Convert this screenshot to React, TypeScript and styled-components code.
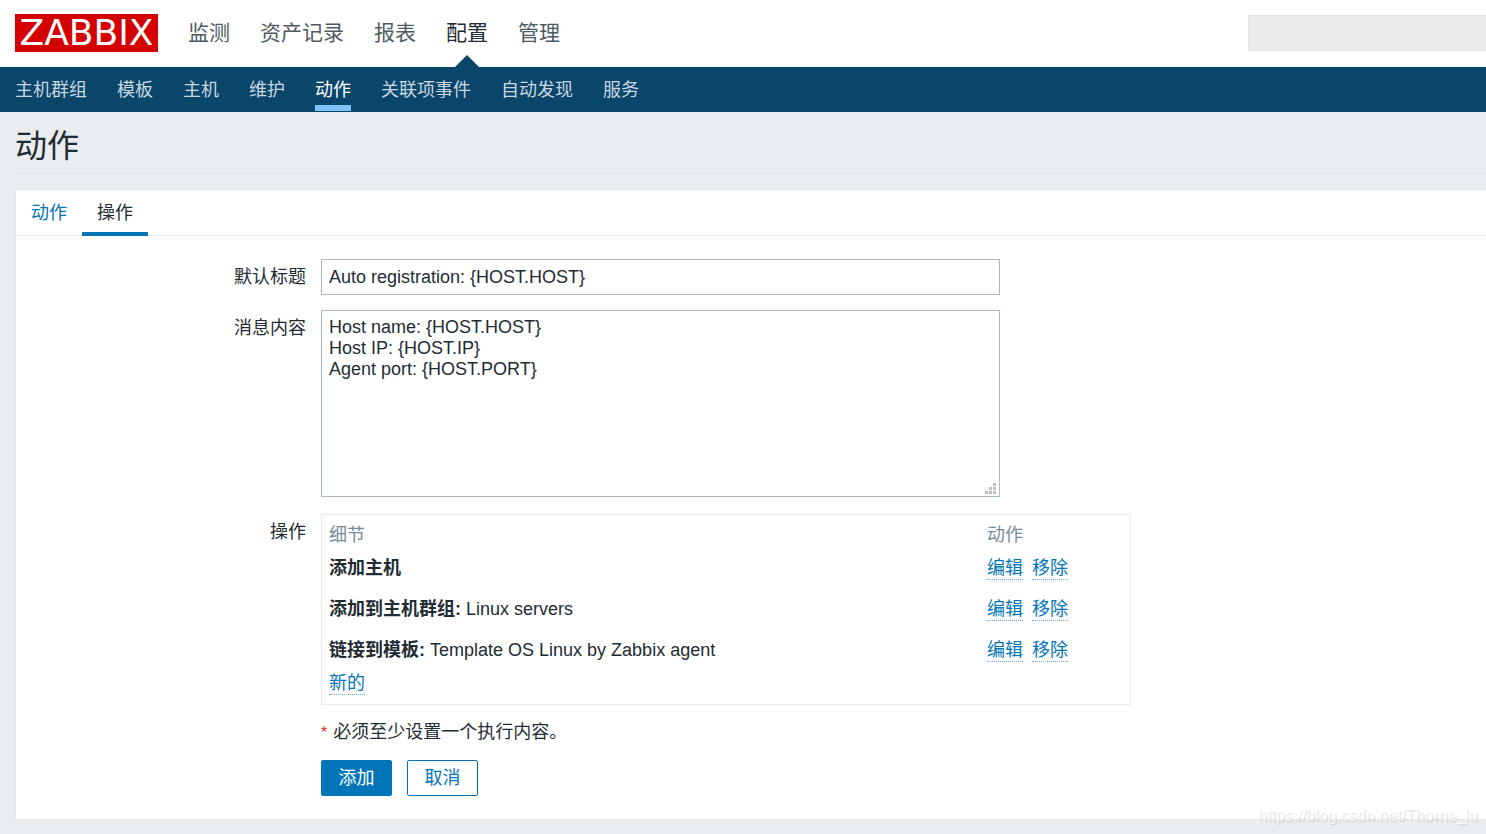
import React from "react";
import styled, { createGlobalStyle } from "styled-components";

const GlobalStyle = createGlobalStyle`
  *, *::before, *::after { box-sizing: border-box; }
  body {
    margin: 0;
    background: #e9edf0;
    color: #1f2c33;
    font-family: "Liberation Sans", "Noto Sans CJK SC", sans-serif;
    font-size: 18px;
    line-height: 21px;
  }
  button, input, textarea { font: inherit; color: inherit; }
  a { text-decoration: none; color: inherit; }
`;

const Page = styled.div`
  position: relative;
  min-height: 100vh;
  display: flex;
  flex-direction: column;
`;

const TopBar = styled.header`
  display: flex;
  align-items: center;
  height: 67px;
  padding: 0 0 2px 15px;
  background: #fff;
`;

const Logo = styled.a`
  width: 143px;
  height: 38px;
  background: #d40000;
  color: #fff;
  font-family: "DejaVu Sans", sans-serif;
  font-size: 36px;
  line-height: 38px;
  text-align: center;
`;

const TopNav = styled.nav`
  display: flex;
  gap: 30px;
  align-self: stretch;
  margin-left: 30px;
`;

const TopLink = styled.a<{ $active?: boolean }>`
  position: relative;
  font-size: 21px;
  line-height: 65px;
  color: ${(p) => (p.$active ? "#1f2c33" : "#4f5b62")};
  &::after {
    content: "";
    display: ${(p) => (p.$active ? "block" : "none")};
    position: absolute;
    bottom: -2px;
    left: 50%;
    margin-left: -12px;
    border: 12px solid transparent;
    border-top-width: 0;
    border-bottom-color: #0a466a;
  }
`;

const Search = styled.input`
  width: 238px;
  height: 36px;
  margin-left: auto;
  padding: 0 7px;
  border: 1px solid #e4e4e4;
  border-right: 0;
  border-radius: 0;
  background: #ebebeb;
  outline: none;
`;

const SubNav = styled.nav`
  display: flex;
  gap: 30px;
  height: 45px;
  padding: 0 15px;
  background: #0a466a;
`;

const SubLink = styled.a<{ $active?: boolean }>`
  height: 44px;
  line-height: 38px;
  padding-top: 4px;
  color: ${(p) => (p.$active ? "#fff" : "#c8d7e0")};
  border-bottom: 6px solid ${(p) => (p.$active ? "#7dc4f5" : "transparent")};
`;

const Content = styled.main`
  padding-left: 15px;
`;

const Title = styled.h1`
  height: 62px;
  margin: 0 0 15px;
  padding-top: 10px;
  border-bottom: 1px solid #dfe4e7;
  font-size: 32px;
  font-weight: 400;
  line-height: 48px;
`;

const Panel = styled.section`
  border: 1px solid #dfe4e7;
  border-right: 0;
  background: #fff;
`;

const Tabs = styled.div`
  display: flex;
  height: 46px;
  border-bottom: 1px solid #ebeef0;
`;

const Tab = styled.button<{ $active?: boolean }>`
  height: 46px;
  padding: 4px 15px 0;
  border: 0;
  border-bottom: 4px solid ${(p) => (p.$active ? "#0275b8" : "transparent")};
  background: none;
  line-height: 38px;
  color: ${(p) => (p.$active ? "#1f2c33" : "#0275b8")};
  cursor: pointer;
`;

const Form = styled.form`
  padding: 23px 0;
`;

const Row = styled.div<{ $gap?: number }>`
  display: grid;
  grid-template-columns: 290px minmax(0, 810px);
  column-gap: 15px;
  margin-bottom: ${(p) => p.$gap ?? 17}px;
  &:last-child { margin-bottom: 0; }
`;

const Label = styled.label`
  text-align: right;
  line-height: 36px;
`;

const Field = styled.div`
  grid-column: 2;
  min-width: 0;
`;

const TextInput = styled.input`
  display: block;
  width: 100%;
  max-width: 679px;
  height: 36px;
  padding: 0 7px;
  border: 1px solid #acbbc2;
  border-radius: 0;
  background: #fff;
  outline: none;
`;

const AreaWrap = styled.div`
  position: relative;
  max-width: 679px;
`;

const TextArea = styled.textarea`
  display: block;
  width: 100%;
  height: 187px;
  padding: 6px 7px;
  border: 1px solid #acbbc2;
  border-radius: 0;
  line-height: 21px;
  resize: none;
  outline: none;
`;

const Grip = styled.svg`
  position: absolute;
  right: 4px;
  bottom: 3px;
  fill: #bdbdbd;
`;

const TableBox = styled.div`
  padding: 8px 7px;
  border: 1px solid #e8ecef;
`;

const Table = styled.table`
  width: 100%;
  border-collapse: collapse;
  table-layout: fixed;
  th, td { padding: 0; text-align: left; vertical-align: middle; }
  th { height: 25px; font-weight: 400; color: #768d99; }
  td { height: 41px; }
  th:last-child { width: 136px; }
  tfoot td { height: 25px; }
`;

const Actions = styled.div`
  display: flex;
  gap: 9px;
`;

const LinkButton = styled.button`
  display: block;
  height: 23px;
  padding: 0;
  border: 0;
  border-bottom: 1px dotted #67acd4;
  background: none;
  line-height: 22px;
  color: #0275b8;
  cursor: pointer;
`;

const Note = styled.p`
  display: flex;
  gap: 6px;
  margin: 0;
`;

const Asterisk = styled.span`
  font-size: 16px;
  color: #e33734;
`;

const Buttons = styled.div`
  display: flex;
  gap: 15px;
`;

const Button = styled.button<{ $primary?: boolean }>`
  width: 71px;
  height: 36px;
  padding: 1px 0 0;
  border: 1px solid #0275b8;
  border-radius: 2px;
  background: ${(p) => (p.$primary ? "#0275b8" : "#fff")};
  color: ${(p) => (p.$primary ? "#fff" : "#0275b8")};
  cursor: pointer;
`;

const Watermark = styled.span`
  position: absolute;
  right: 8px;
  bottom: 8px;
  font-size: 16px;
  color: rgba(255, 255, 255, 0.7);
  text-shadow: 1px 1px 1px rgba(0, 0, 0, 0.14);
`;

const topItems = ["监测", "资产记录", "报表", "配置", "管理"];
const subItems = ["主机群组", "模板", "主机", "维护", "动作", "关联项事件", "自动发现", "服务"];
const operations = [
  { kind: "添加主机", target: "" },
  { kind: "添加到主机群组:", target: "Linux servers" },
  { kind: "链接到模板:", target: "Template OS Linux by Zabbix agent" },
];
const message = "Host name: {HOST.HOST}\nHost IP: {HOST.IP}\nAgent port: {HOST.PORT}";

export default function App() {
  return (
    <Page>
      <GlobalStyle />
      <TopBar>
        <Logo href="#">ZABBIX</Logo>
        <TopNav>
          {topItems.map((item) => (
            <TopLink key={item} href="#" $active={item === "配置"}>{item}</TopLink>
          ))}
        </TopNav>
        <Search type="search" aria-label="搜索" />
      </TopBar>
      <SubNav>
        {subItems.map((item) => (
          <SubLink key={item} href="#" $active={item === "动作"}>{item}</SubLink>
        ))}
      </SubNav>
      <Content>
        <Title>动作</Title>
        <Panel>
          <Tabs role="tablist">
            <Tab type="button" role="tab" aria-selected={false}>动作</Tab>
            <Tab type="button" role="tab" aria-selected $active>操作</Tab>
          </Tabs>
          <Form onSubmit={(e) => e.preventDefault()}>
            <Row $gap={15}>
              <Label htmlFor="subject">默认标题</Label>
              <Field>
                <TextInput id="subject" type="text" defaultValue="Auto registration: {HOST.HOST}" />
              </Field>
            </Row>
            <Row>
              <Label htmlFor="message">消息内容</Label>
              <Field>
                <AreaWrap>
                  <TextArea id="message" defaultValue={message} spellCheck={false} />
                  <Grip width="11" height="11" viewBox="0 0 11 11" aria-hidden="true">
                    <path d="M8 0h3v3h-3zM4 4h3v3h-3zM8 4h3v3h-3zM0 8h3v3h-3zM4 8h3v3h-3zM8 8h3v3h-3z" />
                  </Grip>
                </AreaWrap>
              </Field>
            </Row>
            <Row>
              <Label as="span" id="operations-label">操作</Label>
              <TableBox>
                <Table aria-labelledby="operations-label">
                  <thead>
                    <tr><th>细节</th><th>动作</th></tr>
                  </thead>
                  <tbody>
                    {operations.map((op) => (
                      <tr key={op.kind}>
                        <td><b>{op.kind}</b> {op.target}</td>
                        <td>
                          <Actions>
                            <LinkButton type="button">编辑</LinkButton>
                            <LinkButton type="button">移除</LinkButton>
                          </Actions>
                        </td>
                      </tr>
                    ))}
                  </tbody>
                  <tfoot>
                    <tr><td colSpan={2}><LinkButton type="button">新的</LinkButton></td></tr>
                  </tfoot>
                </Table>
              </TableBox>
            </Row>
            <Row>
              <Field>
                <Note><Asterisk>*</Asterisk>必须至少设置一个执行内容。</Note>
              </Field>
            </Row>
            <Row>
              <Field>
                <Buttons>
                  <Button type="submit" $primary>添加</Button>
                  <Button type="button">取消</Button>
                </Buttons>
              </Field>
            </Row>
          </Form>
        </Panel>
      </Content>
      <Watermark>https://blog.csdn.net/Thorne_lu</Watermark>
    </Page>
  );
}
